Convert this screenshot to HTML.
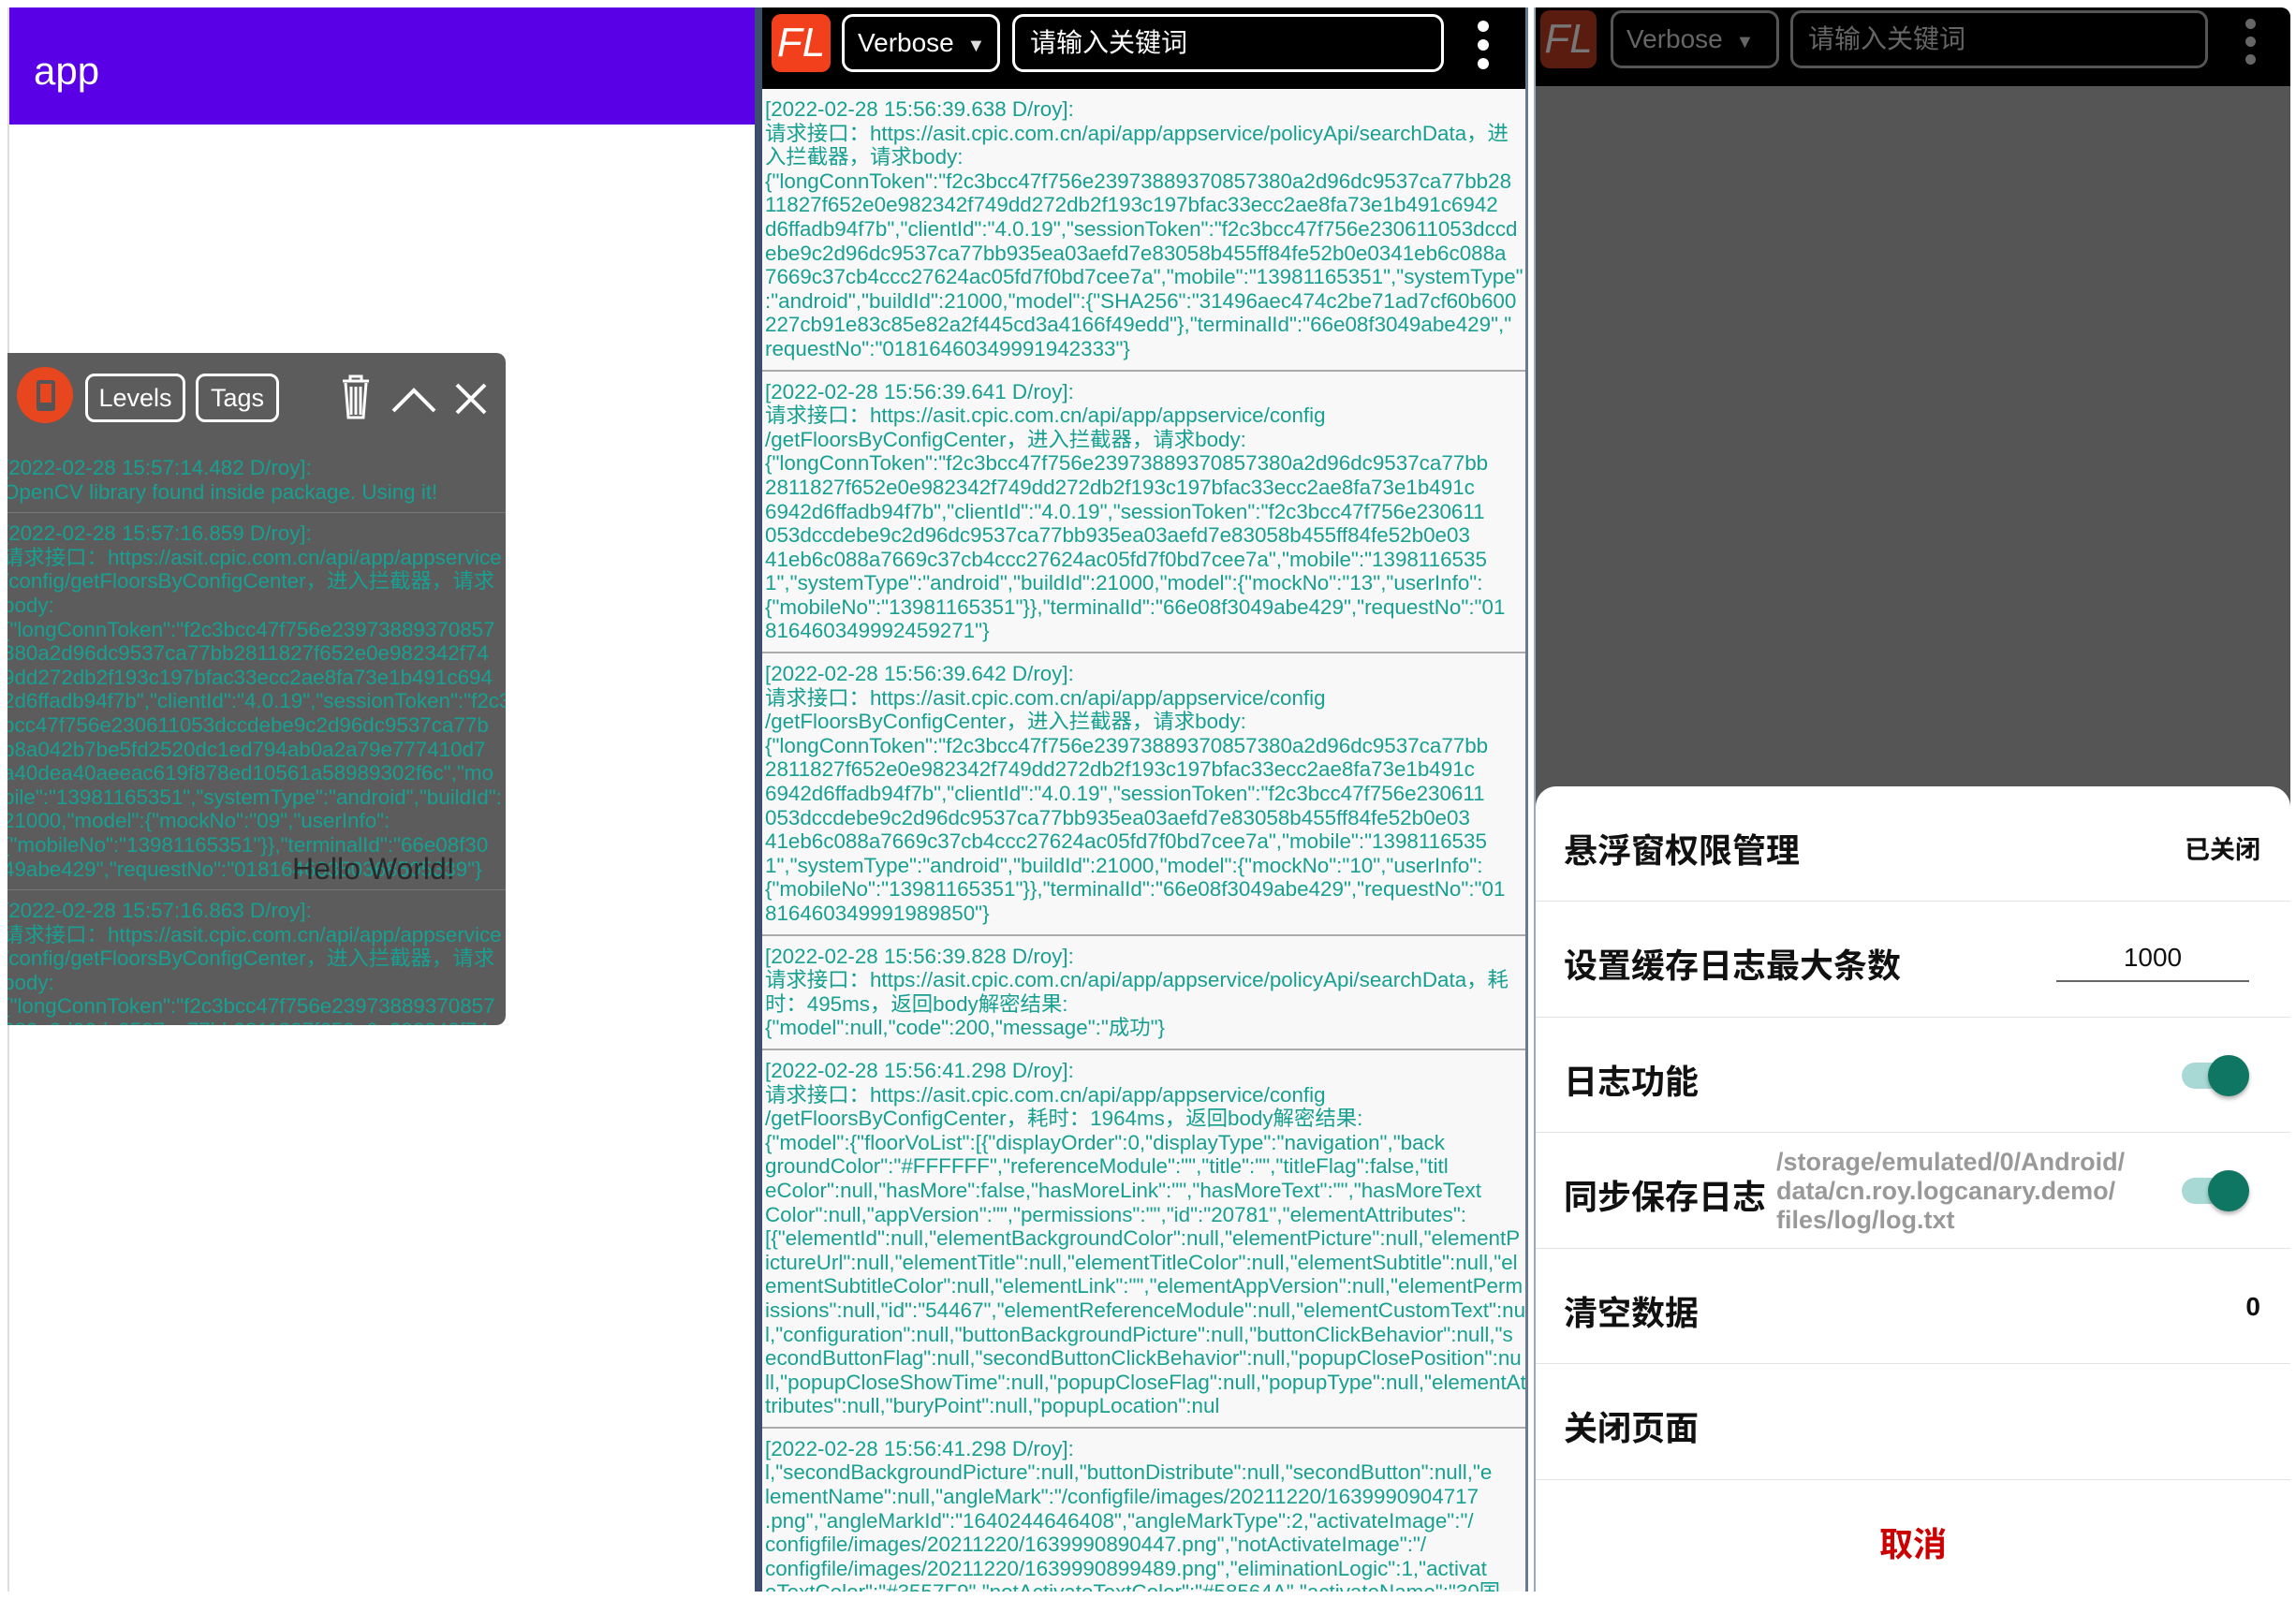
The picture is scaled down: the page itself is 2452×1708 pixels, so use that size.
<!DOCTYPE html>
<html><head><meta charset="utf-8"><style>
*{margin:0;padding:0;box-sizing:border-box}
body{width:2452px;height:1708px;background:#fff;position:relative;overflow:hidden;font-family:"Liberation Sans","Noto Sans CJK SC",sans-serif}
.abs{position:absolute}
.log{color:#17a092;font-size:22.4px;line-height:25.6px;white-space:nowrap}
.log .e{padding:9px 0 9px 3px;border-bottom:2px solid #aaa;overflow:hidden}
.fl{background:#f2401c;border-radius:10px;color:#fff;font-style:italic;font-size:44px;text-align:center;line-height:62px}
.box{border:3px solid #fff;border-radius:12px;color:#fff}
.t{font-size:36px}
</style></head><body>
<!-- panel 1 -->
<div class="abs" style="left:8px;top:8px;width:798px;height:1692px;background:#fff;border-left:2px solid #ddd">
 <div style="height:125px;background:#5a00e6;color:#fff;font-size:42px;padding:44px 0 0 26px">app</div>
</div>
<div class="abs" style="left:8px;top:377px;width:532px;height:718px;background:#5c5c5c;border-radius:0 10px 10px 0;overflow:hidden">
 <div style="position:absolute;left:10px;top:15px;width:60px;height:60px;border-radius:50%;background:#e8461e"></div>
 <div style="position:absolute;left:31px;top:29px;width:20px;height:33px;background:#555;border-radius:3px"></div>
 <div style="position:absolute;left:35px;top:33px;width:12px;height:20px;background:#e8461e"></div>
 <div style="position:absolute;left:83px;top:22px;width:107px;height:52px;border:3px solid #fff;border-radius:10px;color:#fff;font-size:27px;text-align:center;line-height:46px">Levels</div>
 <div style="position:absolute;left:201px;top:22px;width:89px;height:52px;border:3px solid #fff;border-radius:10px;color:#fff;font-size:27px;text-align:center;line-height:46px">Tags</div>
 <svg style="position:absolute;left:350px;top:20px" width="360" height="60" fill="none" stroke="#fff" stroke-width="3">
  <path d="M8 10h28M16 10V5h12v5M11 12l3 37h16l3-37M17 16v30M22 16v30M27 16v30"/>
  <path d="M62 42l22-22 22 22" stroke-width="4"/>
  <path d="M130 14l30 30M160 14l-30 30" stroke-width="4"/>
 </svg>
 <div class="log" style="position:absolute;left:-8px;top:96px;width:540px">
  <div class="e" style="border-bottom:1px solid #777;padding-top:14px">[2022-02-28 15:57:14.482 D/roy]:<br>OpenCV library found inside package. Using it!</div>
  <div class="e" style="border-bottom:1px solid #777">[2022-02-28 15:57:16.859 D/roy]:<br>请求接口：https://asit.cpic.com.cn/api/app/appservice<br>/config/getFloorsByConfigCenter，进入拦截器，请求<br>body:<br>{"longConnToken":"f2c3bcc47f756e23973889370857<br>380a2d96dc9537ca77bb2811827f652e0e982342f74<br>9dd272db2f193c197bfac33ecc2ae8fa73e1b491c694<br>2d6ffadb94f7b","clientId":"4.0.19","sessionToken":"f2c3<br>bcc47f756e230611053dccdebe9c2d96dc9537ca77b<br>b8a042b7be5fd2520dc1ed794ab0a2a79e777410d7<br>a40dea40aeeac619f878ed10561a58989302f6c","mo<br>bile":"13981165351","systemType":"android","buildId":<br>21000,"model":{"mockNo":"09","userInfo":<br>{"mobileNo":"13981165351"}},"terminalId":"66e08f30<br>49abe429","requestNo":"01816460350368505339"}</div>
  <div class="e" style="border:0">[2022-02-28 15:57:16.863 D/roy]:<br>请求接口：https://asit.cpic.com.cn/api/app/appservice<br>/config/getFloorsByConfigCenter，进入拦截器，请求<br>body:<br>{"longConnToken":"f2c3bcc47f756e23973889370857<br>380a2d96dc9537ca77bb2811827f652e0e982342f74</div>
 </div>
</div>
<div class="abs" style="left:312px;top:910px;font-size:32px;color:#2a2a2a">Hello World!</div>
<!-- panel 2 -->
<div class="abs" style="left:806px;top:8px;width:826px;height:1692px;background:#f8f8f8;border-left:8px solid #3d4d6d;border-right:3px solid #6a7a90;overflow:hidden">
 <div style="height:87px;background:#000;position:relative">
  <div class="fl abs" style="left:10px;top:7px;width:63px;height:62px">FL</div>
  <div class="box abs" style="left:85px;top:7px;width:169px;height:62px;font-size:28px;line-height:56px;padding-left:14px">Verbose <span style="font-size:20px;margin-left:6px;color:#ddd">▼</span></div>
  <div class="box abs" style="left:267px;top:7px;width:461px;height:62px;font-size:28px;line-height:56px;padding-left:16px">请输入关键词</div>
  <div class="abs" style="left:764px;top:14px;width:12px;height:12px;border-radius:50%;background:#fff;box-shadow:0 20px 0 #fff,0 40px 0 #fff"></div>
 </div>
 <div class="log">
  <div class="e">[2022-02-28 15:56:39.638 D/roy]:<br>请求接口：https://asit.cpic.com.cn/api/app/appservice/policyApi/searchData，进<br>入拦截器，请求body:<br>{"longConnToken":"f2c3bcc47f756e23973889370857380a2d96dc9537ca77bb28<br>11827f652e0e982342f749dd272db2f193c197bfac33ecc2ae8fa73e1b491c6942<br>d6ffadb94f7b","clientId":"4.0.19","sessionToken":"f2c3bcc47f756e230611053dccd<br>ebe9c2d96dc9537ca77bb935ea03aefd7e83058b455ff84fe52b0e0341eb6c088a<br>7669c37cb4ccc27624ac05fd7f0bd7cee7a","mobile":"13981165351","systemType"<br>:"android","buildId":21000,"model":{"SHA256":"31496aec474c2be71ad7cf60b600<br>227cb91e83c85e82a2f445cd3a4166f49edd"},"terminalId":"66e08f3049abe429","<br>requestNo":"01816460349991942333"}</div>
  <div class="e">[2022-02-28 15:56:39.641 D/roy]:<br>请求接口：https://asit.cpic.com.cn/api/app/appservice/config<br>/getFloorsByConfigCenter，进入拦截器，请求body:<br>{"longConnToken":"f2c3bcc47f756e23973889370857380a2d96dc9537ca77bb<br>2811827f652e0e982342f749dd272db2f193c197bfac33ecc2ae8fa73e1b491c<br>6942d6ffadb94f7b","clientId":"4.0.19","sessionToken":"f2c3bcc47f756e230611<br>053dccdebe9c2d96dc9537ca77bb935ea03aefd7e83058b455ff84fe52b0e03<br>41eb6c088a7669c37cb4ccc27624ac05fd7f0bd7cee7a","mobile":"1398116535<br>1","systemType":"android","buildId":21000,"model":{"mockNo":"13","userInfo":<br>{"mobileNo":"13981165351"}},"terminalId":"66e08f3049abe429","requestNo":"01<br>816460349992459271"}</div>
  <div class="e">[2022-02-28 15:56:39.642 D/roy]:<br>请求接口：https://asit.cpic.com.cn/api/app/appservice/config<br>/getFloorsByConfigCenter，进入拦截器，请求body:<br>{"longConnToken":"f2c3bcc47f756e23973889370857380a2d96dc9537ca77bb<br>2811827f652e0e982342f749dd272db2f193c197bfac33ecc2ae8fa73e1b491c<br>6942d6ffadb94f7b","clientId":"4.0.19","sessionToken":"f2c3bcc47f756e230611<br>053dccdebe9c2d96dc9537ca77bb935ea03aefd7e83058b455ff84fe52b0e03<br>41eb6c088a7669c37cb4ccc27624ac05fd7f0bd7cee7a","mobile":"1398116535<br>1","systemType":"android","buildId":21000,"model":{"mockNo":"10","userInfo":<br>{"mobileNo":"13981165351"}},"terminalId":"66e08f3049abe429","requestNo":"01<br>816460349991989850"}</div>
  <div class="e">[2022-02-28 15:56:39.828 D/roy]:<br>请求接口：https://asit.cpic.com.cn/api/app/appservice/policyApi/searchData，耗<br>时：495ms，返回body解密结果:<br>{"model":null,"code":200,"message":"成功"}</div>
  <div class="e">[2022-02-28 15:56:41.298 D/roy]:<br>请求接口：https://asit.cpic.com.cn/api/app/appservice/config<br>/getFloorsByConfigCenter，耗时：1964ms，返回body解密结果:<br>{"model":{"floorVoList":[{"displayOrder":0,"displayType":"navigation","back<br>groundColor":"#FFFFFF","referenceModule":"","title":"","titleFlag":false,"titl<br>eColor":null,"hasMore":false,"hasMoreLink":"","hasMoreText":"","hasMoreText<br>Color":null,"appVersion":"","permissions":"","id":"20781","elementAttributes":<br>[{"elementId":null,"elementBackgroundColor":null,"elementPicture":null,"elementP<br>ictureUrl":null,"elementTitle":null,"elementTitleColor":null,"elementSubtitle":null,"el<br>ementSubtitleColor":null,"elementLink":"","elementAppVersion":null,"elementPerm<br>issions":null,"id":"54467","elementReferenceModule":null,"elementCustomText":nul<br>l,"configuration":null,"buttonBackgroundPicture":null,"buttonClickBehavior":null,"s<br>econdButtonFlag":null,"secondButtonClickBehavior":null,"popupClosePosition":nu<br>ll,"popupCloseShowTime":null,"popupCloseFlag":null,"popupType":null,"elementAt<br>tributes":null,"buryPoint":null,"popupLocation":nul</div>
  <div class="e" style="border:0">[2022-02-28 15:56:41.298 D/roy]:<br>l,"secondBackgroundPicture":null,"buttonDistribute":null,"secondButton":null,"e<br>lementName":null,"angleMark":"/configfile/images/20211220/1639990904717<br>.png","angleMarkId":"1640244646408","angleMarkType":2,"activateImage":"/<br>configfile/images/20211220/1639990890447.png","notActivateImage":"/<br>configfile/images/20211220/1639990899489.png","eliminationLogic":1,"activat<br>eTextColor":"#3557F9","notActivateTextColor":"#58564A","activateName":"30国</div>
 </div>
</div>
<!-- panel 3 -->
<div class="abs" style="left:1638px;top:8px;width:808px;height:1692px;background:#555;overflow:hidden;border-radius:0 10px 0 0;border-left:2px solid #9aa8bc">
 <div style="height:84px;background:#000;position:relative">
  <div class="fl abs" style="left:5px;top:3px;width:60px;height:62px;background:#5a1c0e;color:#777">FL</div>
  <div class="box abs" style="left:80px;top:3px;width:180px;height:62px;font-size:28px;line-height:56px;padding-left:14px;border-color:#555;color:#666">Verbose <span style="font-size:20px;margin-left:6px">▼</span></div>
  <div class="box abs" style="left:272px;top:3px;width:446px;height:62px;font-size:28px;line-height:56px;padding-left:16px;border-color:#555;color:#666">请输入关键词</div>
  <div class="abs" style="left:758px;top:12px;width:11px;height:11px;border-radius:50%;background:#666;box-shadow:0 19px 0 #666,0 38px 0 #666"></div>
 </div>
</div>
<div class="abs" style="left:1640px;top:840px;width:806px;height:860px;background:#fff;border-radius:22px 22px 0 0;font-weight:bold;color:#111">
 <div style="height:123px;border-bottom:1px solid #e2e2e2;position:relative"><span class="abs t" style="left:30px;top:40px">悬浮窗权限管理</span><span class="abs" style="right:32px;top:46px;font-size:27px">已关闭</span></div>
 <div style="height:124px;border-bottom:1px solid #e2e2e2;position:relative"><span class="abs t" style="left:30px;top:40px">设置缓存日志最大条数</span><span class="abs" style="left:556px;top:44px;width:206px;text-align:center;font-size:28px;font-weight:normal;padding-bottom:8px;border-bottom:2px solid #666">1000</span></div>
 <div style="height:123px;border-bottom:1px solid #e2e2e2;position:relative"><span class="abs t" style="left:30px;top:40px">日志功能</span>
  <div class="abs" style="left:690px;top:48px;width:62px;height:28px;border-radius:14px;background:#a8d9d4"></div><div class="abs" style="left:718px;top:40px;width:44px;height:44px;border-radius:50%;background:#0f7663;box-shadow:0 3px 4px rgba(0,0,0,.3)"></div></div>
 <div style="height:124px;border-bottom:1px solid #e2e2e2;position:relative"><span class="abs t" style="left:30px;top:40px">同步保存日志</span>
  <div class="abs" style="left:257px;top:16px;font-size:27px;line-height:31px;color:#999">/storage/emulated/0/Android/<br>data/cn.roy.logcanary.demo/<br>files/log/log.txt</div>
  <div class="abs" style="left:690px;top:48px;width:62px;height:28px;border-radius:14px;background:#a8d9d4"></div><div class="abs" style="left:718px;top:40px;width:44px;height:44px;border-radius:50%;background:#0f7663;box-shadow:0 3px 4px rgba(0,0,0,.3)"></div></div>
 <div style="height:123px;border-bottom:1px solid #e2e2e2;position:relative"><span class="abs t" style="left:30px;top:40px">清空数据</span><span class="abs" style="right:32px;top:46px;font-size:28px">0</span></div>
 <div style="height:124px;border-bottom:1px solid #e2e2e2;position:relative"><span class="abs t" style="left:30px;top:40px">关闭页面</span></div>
 <div style="text-align:center;color:#cc0000;font-size:36px;padding-top:40px">取消</div>
</div>
</body></html>
